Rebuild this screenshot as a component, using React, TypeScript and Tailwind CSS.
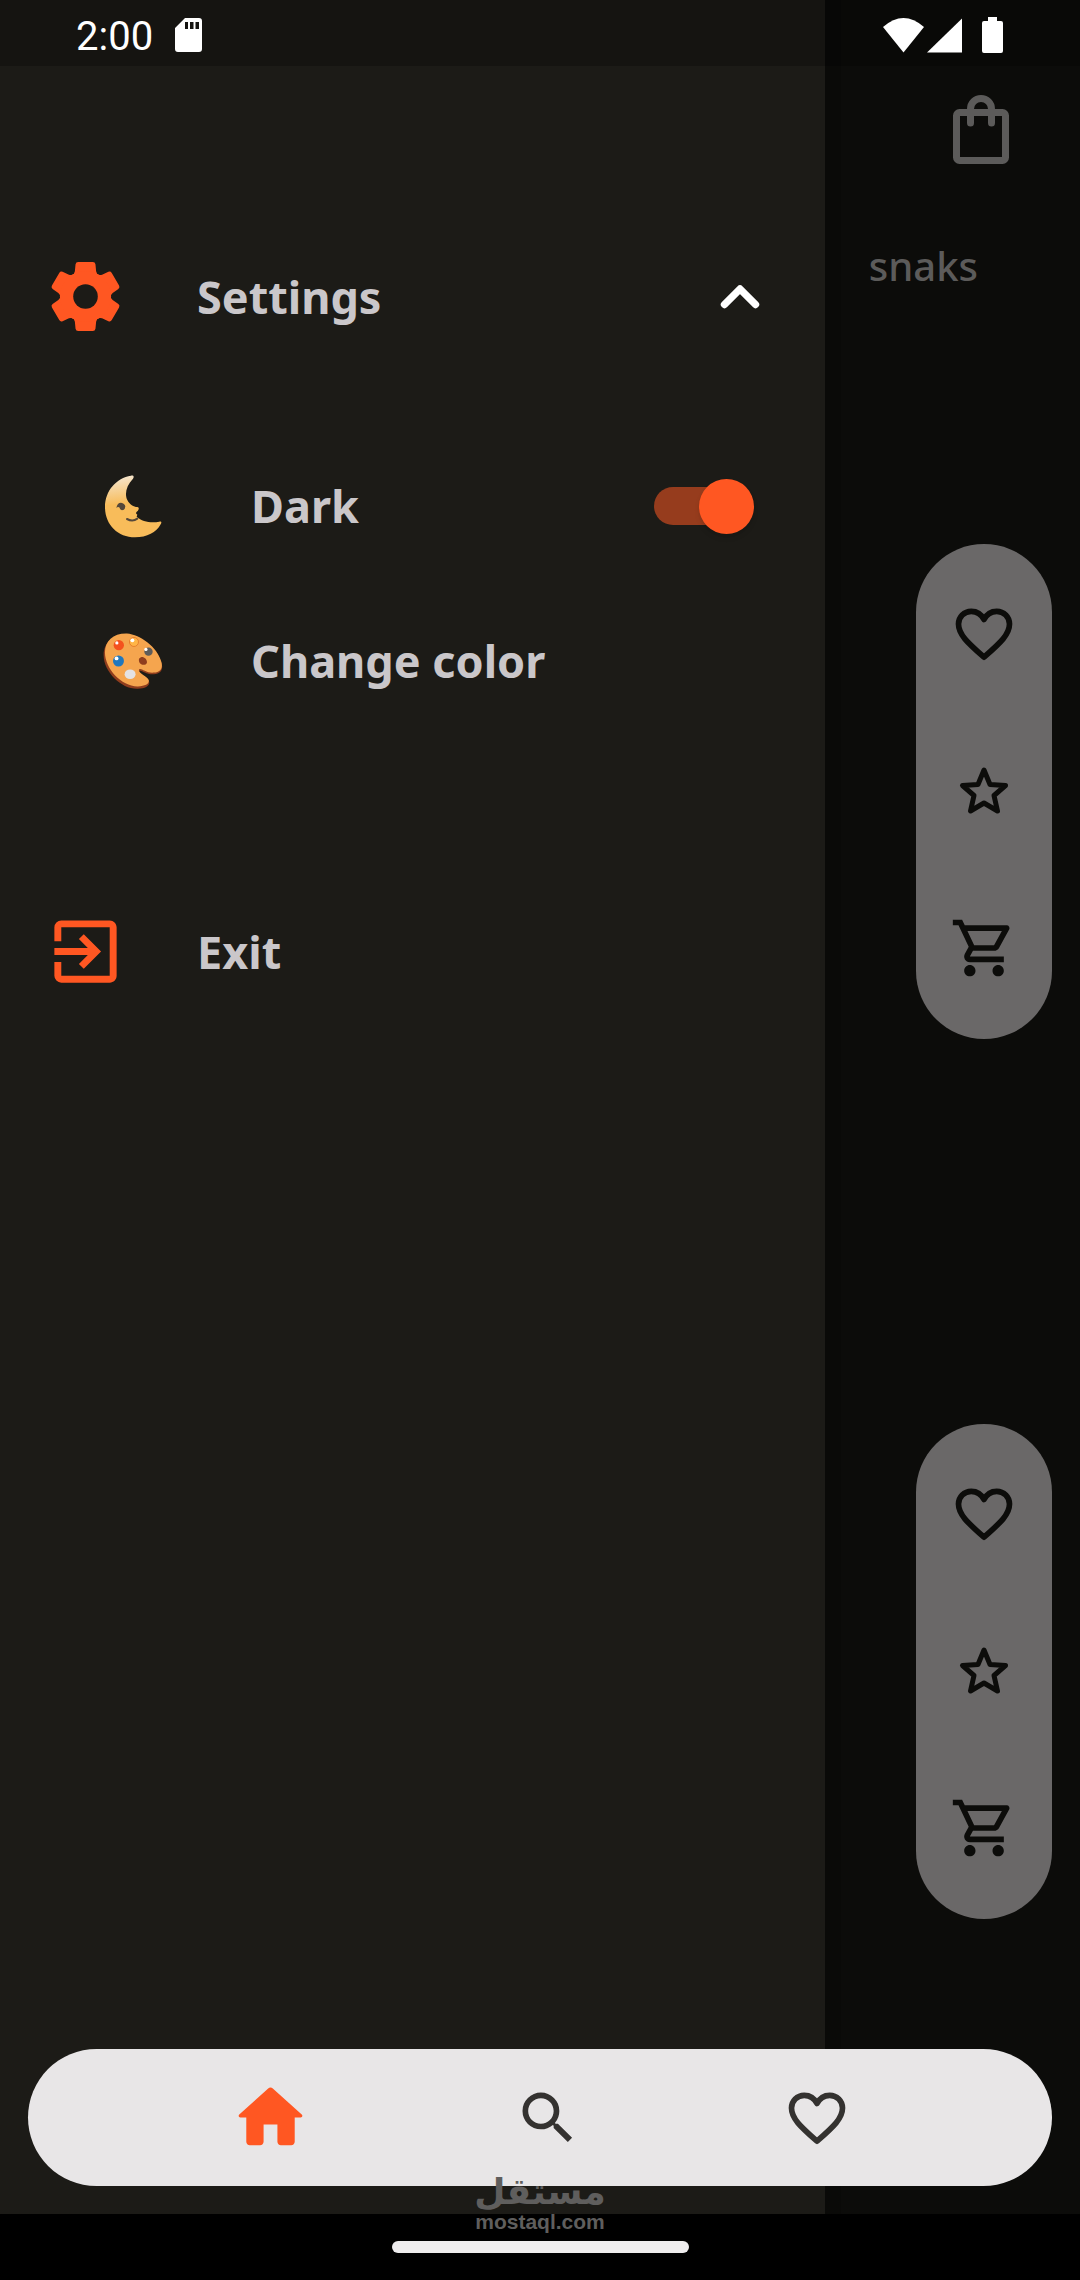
import React, { useState } from 'react';
import { MdExitToApp, MdOutlineShoppingCart, MdSearch } from 'react-icons/md';

type IconProps = { className?: string };

const GearIcon: React.FC<IconProps> = ({ className }) => (
  <svg className={className} viewBox="-125 -125 250 250" fill="currentColor" aria-hidden="true">
    {[0, 60, 120, 180, 240, 300].map((angle) => (
      <path
        key={angle}
        transform={`rotate(${angle})`}
        d="M-42-64Q-33-67-32-76L-30-97Q-29-104-22-104L22-104Q29-104 30-97L32-76Q33-67 42-64L0 0Z"
      />
    ))}
    <path fillRule="evenodd" d="M0-77a77 77 0 1 0 0 154a77 77 0 1 0 0-154Z" />
    <circle r="37" fill="#1c1b17" />
  </svg>
);

const ChevronUp: React.FC<IconProps> = ({ className }) => (
  <svg className={className} viewBox="0 0 40 24" fill="none" stroke="currentColor" strokeWidth="7.400" strokeLinecap="round" strokeLinejoin="round" aria-hidden="true">
    <path d="M4.500 19.500 20 4 35.500 19.500" />
  </svg>
);

const HeartIcon: React.FC<IconProps> = ({ className }) => (
  <svg className={className} viewBox="0 0 24 24" fill="none" stroke="currentColor" strokeWidth="2" strokeLinejoin="round" aria-hidden="true">
    <path d="M12 20.200C6 14.900 3 12.100 3 8.500 3 6 5 4 7.500 4c1.700 0 3.500.9 4.500 2.900C13 4.900 14.800 4 16.500 4 19 4 21 6 21 8.500c0 3.600-3 6.400-9 11.700z" />
  </svg>
);

const StarIcon: React.FC<IconProps> = ({ className }) => (
  <svg className={className} viewBox="0 0 68 68" fill="none" stroke="currentColor" strokeWidth="5" strokeLinejoin="round" aria-hidden="true">
    <path d="M34 13 40 27.500 55.500 28.500 44 38.500 47.500 54 34 46 20.500 54 24 38.500 12.500 28.500 28 27.500Z" />
  </svg>
);

const HomeIcon: React.FC<IconProps> = ({ className }) => (
  <svg className={className} viewBox="0 0 24 24" fill="currentColor" aria-hidden="true">
    <path d="M10 19v-5h4v5c0 .55.45 1 1 1h3c.55 0 1-.45 1-1v-7h1.700c.46 0 .68-.57.33-.87L12.670 3.600c-.38-.34-.96-.34-1.340 0l-8.360 7.530c-.34.3-.13.87.33.87H5v7c0 .55.45 1 1 1h3c.55 0 1-.45 1-1z" />
  </svg>
);

const BagIcon: React.FC<IconProps> = ({ className }) => (
  <svg className={className} viewBox="0 0 56 70" fill="none" stroke="currentColor" strokeWidth="7" strokeLinecap="round" strokeLinejoin="round" aria-hidden="true">
    <rect x="3.500" y="17.500" width="49" height="48" rx="3" />
    <path d="M17.500 28V14a10.500 10.500 0 0 1 21 0v14" />
  </svg>
);

const MoonIcon: React.FC<IconProps> = ({ className }) => (
  <svg className={className} viewBox="0 0 180 192" aria-hidden="true">
    <defs>
      <linearGradient id="moon" x1="0.300" y1="0" x2="0.350" y2="0.450">
        <stop offset="0" stopColor="#f5e6cf" />
        <stop offset="1" stopColor="#f8bc5a" />
      </linearGradient>
    </defs>
    <path
      fill="url(#moon)"
      d="M84 5C92 4 94 8 90 14C70 34 64 60 73 78C80 92 92 99 103 99C109 100 108 106 104 111C98 116 97 118 103 122L101 128C118 144 144 147 169 143C175 142 177 145 173 151C160 176 132 190 96 190C44 190 6 152 6 99C6 50 40 12 84 5Z"
    />
    <path d="M40 102q3-16 14-16 11 2 13 11-1 12-10 12-6-1-7-8-5-4-10 1z" fill="#55483a" />
    <path d="M72 135q17 9 31-1" fill="none" stroke="#55483a" strokeWidth="6" strokeLinecap="round" />
  </svg>
);

const PaletteIcon: React.FC<IconProps> = ({ className }) => (
  <svg className={className} viewBox="0 0 186 180" aria-hidden="true">
    <path
      fill="#8f3d1d"
      d="M72 9C30 8 2 34 2 72C2 124 58 178 108 176C132 175 146 166 143 154C140 142 110 132 112 122C116 114 134 134 158 131C182 130 188 112 180 92C168 52 112 12 72 9Z"
    />
    <path
      fill="#f5a54e"
      d="M74 5C32 4 6 28 6 64C6 114 58 170 108 169C132 168 144 160 142 150C140 138 106 128 112 116C118 110 134 129 158 126C180 125 187 110 180 90C168 48 116 8 74 5ZM118 78C128 76 138 86 136 96C132 106 114 102 112 92C110 84 112 80 118 78Z"
      fillRule="evenodd"
    />
    <circle cx="49" cy="41" r="16" fill="#f4511e" />
    <circle cx="43" cy="34" r="5" fill="#fff" />
    <circle cx="96" cy="31" r="14" fill="#ffb547" stroke="#e57c2c" strokeWidth="3" />
    <circle cx="91" cy="26" r="6" fill="#fff" />
    <circle cx="141" cy="61" r="13" fill="#5e5c5a" />
    <circle cx="133" cy="54" r="5" fill="#fff" />
    <circle cx="48" cy="90" r="17" fill="#1f77bd" />
    <circle cx="42" cy="82" r="6" fill="#fff" />
    <ellipse cx="84" cy="131" rx="17" ry="15" fill="#e4e2e3" />
  </svg>
);

const StatusBar: React.FC = () => (
  <header className="absolute inset-x-0 top-0 flex h-[66px] items-center justify-between bg-black/25 pt-1 pr-[77px] pl-[76px] text-white">
    <div className="flex items-center gap-[22px]">
      <span className="pt-1 font-[Roboto,sans-serif] text-[40px] leading-[60px]">2:00</span>
      <svg className="h-[34px] w-[27px]" viewBox="0 0 27 34" aria-hidden="true">
        <path fill="currentColor" fillRule="evenodd" d="M10 0h14a3 3 0 0 1 3 3v28a3 3 0 0 1-3 3H3a3 3 0 0 1-3-3V10zM10 4v7h3V4zM15 4v7h3.500V4zM20.500 4v7H24V4z" />
      </svg>
    </div>
    <svg className="h-9 w-[120px]" viewBox="0 0 120 36" fill="currentColor" aria-hidden="true">
      <path d="M0 10Q20.500-8 41 10L20.500 35.500Z" />
      <path d="M44 35.500 79 1.500v34z" />
      <path d="M105 0h9v4h4a2 2 0 0 1 2 2v28a2 2 0 0 1-2 2h-17a2 2 0 0 1-2-2V6a2 2 0 0 1 2-2h4z" />
    </svg>
  </header>
);

const ProductActions: React.FC = () => (
  <div className="flex flex-col items-center gap-[89px] rounded-full bg-[#6a6868] px-[34px] pt-14 pb-[57px] text-[#0c0c0a]">
    <button type="button" aria-label="Add to favorites">
      <HeartIcon className="size-[68px]" />
    </button>
    <button type="button" aria-label="Rate">
      <StarIcon className="size-[68px]" />
    </button>
    <button type="button" aria-label="Add to cart">
      <MdOutlineShoppingCart className="size-[68px]" />
    </button>
  </div>
);

const Drawer: React.FC = () => {
  const [dark, setDark] = useState(true);

  return (
    <aside className="flex-1 bg-[#1c1b17] pt-[255px] text-[45px] leading-[64px] font-bold text-[#cac7ca]">
      <button type="button" className="flex w-full items-center pr-[65px] pl-11 text-left" aria-expanded="true">
        <GearIcon className="size-[83px] text-[#ff5722]" />
        <span className="ml-[70px] flex-1">Settings</span>
        <ChevronUp className="h-6 w-10 text-white" />
      </button>

      <label className="mt-[136px] flex items-center pr-[71px] pl-[103px]">
        <MoonIcon className="h-16 w-[60px]" />
        <span className="ml-[88px] flex-1">Dark</span>
        <input
          type="checkbox"
          role="switch"
          className="peer sr-only"
          checked={dark}
          onChange={(e) => setDark(e.target.checked)}
        />
        <span className="flex h-[38px] w-[91px] items-center rounded-full bg-[#57544f] peer-checked:mr-[9px] peer-checked:justify-end peer-checked:bg-[#963c1d] peer-checked:[&>span]:-mr-[9px] peer-checked:[&>span]:bg-[#ff5722]">
          <span className="size-[55px] shrink-0 rounded-full bg-[#cac7ca] shadow-md"></span>
        </span>
      </label>

      <button type="button" className="mt-[91px] flex w-full items-center pl-[103px] text-left">
        <PaletteIcon className="h-[60px] w-[60px]" />
        <span className="ml-[88px]">Change color</span>
      </button>

      <button type="button" className="mt-[217px] flex w-full items-center pl-11 text-left">
        <MdExitToApp className="size-[83px] text-[#ff5722]" />
        <span className="ml-[70px]">Exit</span>
      </button>
    </aside>
  );
};

const BottomNav: React.FC = () => (
  <nav className="absolute inset-x-7 bottom-[94px] flex h-[137px] items-center justify-evenly rounded-full bg-[#e8e6e7] text-[#343230]">
    <button type="button" aria-label="Home">
      <HomeIcon className="size-[83px] text-[#ff5722]" />
    </button>
    <button type="button" aria-label="Search">
      <MdSearch className="size-[68px]" />
    </button>
    <button type="button" aria-label="Favorites">
      <HeartIcon className="size-[68px]" />
    </button>
  </nav>
);

const App: React.FC = () => {
  return (
    <div className="relative flex min-h-screen flex-col bg-black font-['Noto_Sans',sans-serif]">
      <div className="flex flex-1">
        <Drawer />
        {/* Dimmed page behind the open drawer */}
        <main className="flex w-[255px] flex-col items-end border-l-[16px] border-[#0a0a08] bg-[#0c0c0a] pt-[95px] pr-7">
          <button type="button" className="mr-[43px] text-[#5c5b5a]" aria-label="Shopping bag">
            <BagIcon className="h-[70px] w-14" />
          </button>
          <a href="#snaks" className="mt-[73px] mr-[74px] text-[40px] leading-[56px] font-medium text-[#5c5b5a]">
            snaks
          </a>
          <div className="mt-[250px] flex flex-col gap-[385px]">
            <ProductActions />
            <ProductActions />
          </div>
        </main>
      </div>

      <StatusBar />
      <BottomNav />

      {/* System gesture bar */}
      <footer className="flex h-[66px] items-end justify-center pb-[27px]">
        <div className="h-3 w-[297px] rounded-full bg-[#efedee]"></div>
      </footer>

      <div className="absolute inset-x-0 bottom-[46px] flex flex-col items-center text-[#5f5e5d]">
        <span lang="ar" dir="rtl" className="font-['DejaVu_Sans',sans-serif] text-[36px] leading-[36px] font-bold">مستقل</span>
        <span className="font-['Liberation_Sans',sans-serif] text-[21px] leading-[24px] font-bold">mostaql.com</span>
      </div>
    </div>
  );
};

export default App;
